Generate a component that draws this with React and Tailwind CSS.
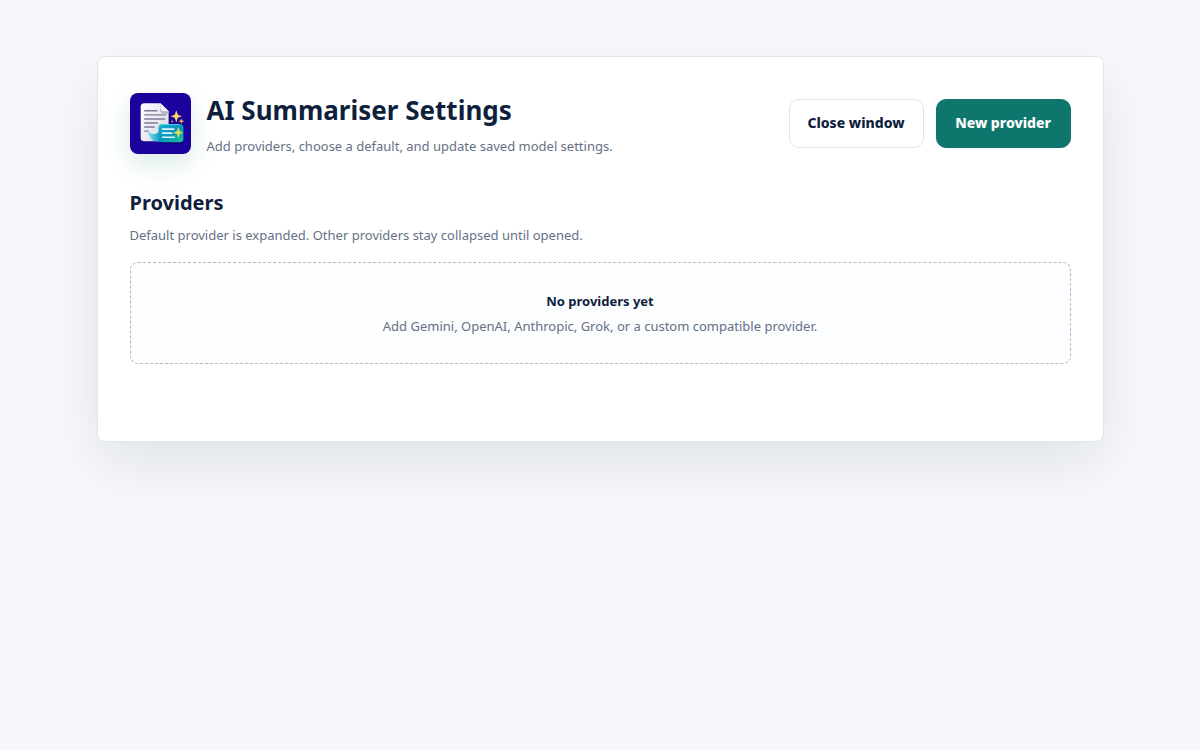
function AppLogo() {
  return (
    <svg
      viewBox="0 0 60 60"
      aria-hidden="true"
      className="size-[61px] shrink-0 rounded-lg shadow-[0_10px_24px_rgba(15,118,110,0.16)]"
    >
      <defs>
        <linearGradient id="paper" x1="0" y1="0" x2="1" y2="1">
          <stop offset="0" stopColor="#ffffff" />
          <stop offset="1" stopColor="#d5d8e6" />
        </linearGradient>
        <linearGradient id="bubble" x1="0" y1="0" x2="1" y2="1">
          <stop offset="0" stopColor="#12b4cc" />
          <stop offset="0.5" stopColor="#0f94bd" />
          <stop offset="1" stopColor="#16c49a" />
        </linearGradient>
        <linearGradient id="tail" x1="0" y1="0" x2="1" y2="0">
          <stop offset="0" stopColor="#8be4e4" />
          <stop offset="1" stopColor="#129fc8" />
        </linearGradient>
      </defs>
      <rect width="60" height="60" fill="#1c029c" />
      <path d="M13 14.500h20l6.500 6v27.500H15q-5 0-5-5V17z" fill="#0c0059" opacity="0.55" />
      <path
        d="M14 10H30l8 8V44q0 3.500-3.500 3.500H14Q10.500 47.500 10.500 44V13.500Q10.500 10 14 10z"
        fill="url(#paper)"
      />
      <path d="M30 10l8 8v2.500h-5Q29.500 20 29.500 15z" fill="#b4b3c9" />
      <path d="M30 10l8 8h-4.500q-3.500 0-3.500-3.500z" fill="#f8f8fc" />
      <g stroke="#807a98" strokeWidth="1.400" strokeLinecap="round">
        <path d="M14.500 17.500H26.500" />
        <path d="M14.500 21.500H35" />
        <path d="M14.500 25.500H34" />
        <path d="M14.500 29.500H27" />
        <path d="M14.500 33.500H24" />
        <path d="M14.500 37.500H18" />
      </g>
      <path d="M29 34h23.500v16H32q-3-1-3-4z" fill="#09005c" opacity="0.55" />
      <path d="M17.500 36.500c2.500 4.500 6 5 11.500 1.500v9.500c-6 1.500-11-3-11.500-11z" fill="url(#tail)" />
      <rect x="28" y="30.500" width="24.500" height="18" rx="3.500" fill="url(#bubble)" />
      <path d="M29 34q0-3 3-3h17" stroke="#63dbe5" strokeWidth="0.800" fill="none" />
      <g stroke="#d9f6ff" strokeWidth="1.600" strokeLinecap="round">
        <path d="M32 35.500H43" />
        <path d="M32 39.500H41" />
        <path d="M32 43.500H43.500" />
      </g>
      <path d="M47.500 33.500l1.400 4.100 3.600 1.400-3.600 1.400-1.400 4.200-1.400-4.200-3.600-1.400 3.600-1.400z" fill="#d9df55" />
      <path d="M45.500 17l1.500 4.400 4 1.500-4 1.500-1.500 4.500-1.500-4.500-4-1.500 4-1.500z" fill="#ffd46a" />
      <path d="M50.500 25l.8 1.900 2 .8-2 .8-.8 2-.8-2-2-.8 2-.8z" fill="#f2ad4b" />
      <circle cx="41.500" cy="28" r="1" fill="#d9964b" />
    </svg>
  );
}

export default function App() {
  return (
    <div className="min-h-screen bg-[#f6f8fb] px-6 py-14 font-['Noto_Sans','Open_Sans',sans-serif] text-[13px] text-[#0f1f3d]">
      <main className="mx-auto max-w-[1007px] rounded-lg border border-[#e2e6ec] bg-white px-8 pt-8 pb-[77px] shadow-[0_22px_54px_rgba(15,23,42,0.09)]">
        <header className="flex flex-wrap items-center justify-between gap-4">
          <div className="flex items-center gap-4">
            <AppLogo />
            <div>
              <h1 className="text-[26px] leading-[42px] font-bold">AI Summariser Settings</h1>
              <p className="mt-1 leading-[22px] text-[#667085]">
                Add providers, choose a default, and update saved model settings.
              </p>
            </div>
          </div>
          <div className="flex gap-3 text-sm">
            <button
              type="button"
              className="h-[49px] min-w-[135px] rounded-[10px] border border-[#e0e4ea] bg-white px-4 font-extrabold"
            >
              Close window
            </button>
            <button
              type="button"
              className="h-[49px] min-w-[135px] rounded-[10px] border border-[#0f766e] bg-[#0f766e] px-4 font-extrabold text-white"
            >
              New provider
            </button>
          </div>
        </header>

        <section className="mt-8">
          <h2 className="text-xl leading-7 font-bold">Providers</h2>
          <p className="mt-1.5 leading-6 text-[#667085]">
            Default provider is expanded. Other providers stay collapsed until opened.
          </p>
          <div className="mt-[15px] rounded-lg border border-dashed border-[#b4bbc4] bg-[#fbfdff] px-6 py-[25px] text-center">
            <h3 className="leading-[26px] font-bold">No providers yet</h3>
            <p className="leading-6 text-[#667085]">
              Add Gemini, OpenAI, Anthropic, Grok, or a custom compatible provider.
            </p>
          </div>
        </section>
      </main>
    </div>
  );
}
